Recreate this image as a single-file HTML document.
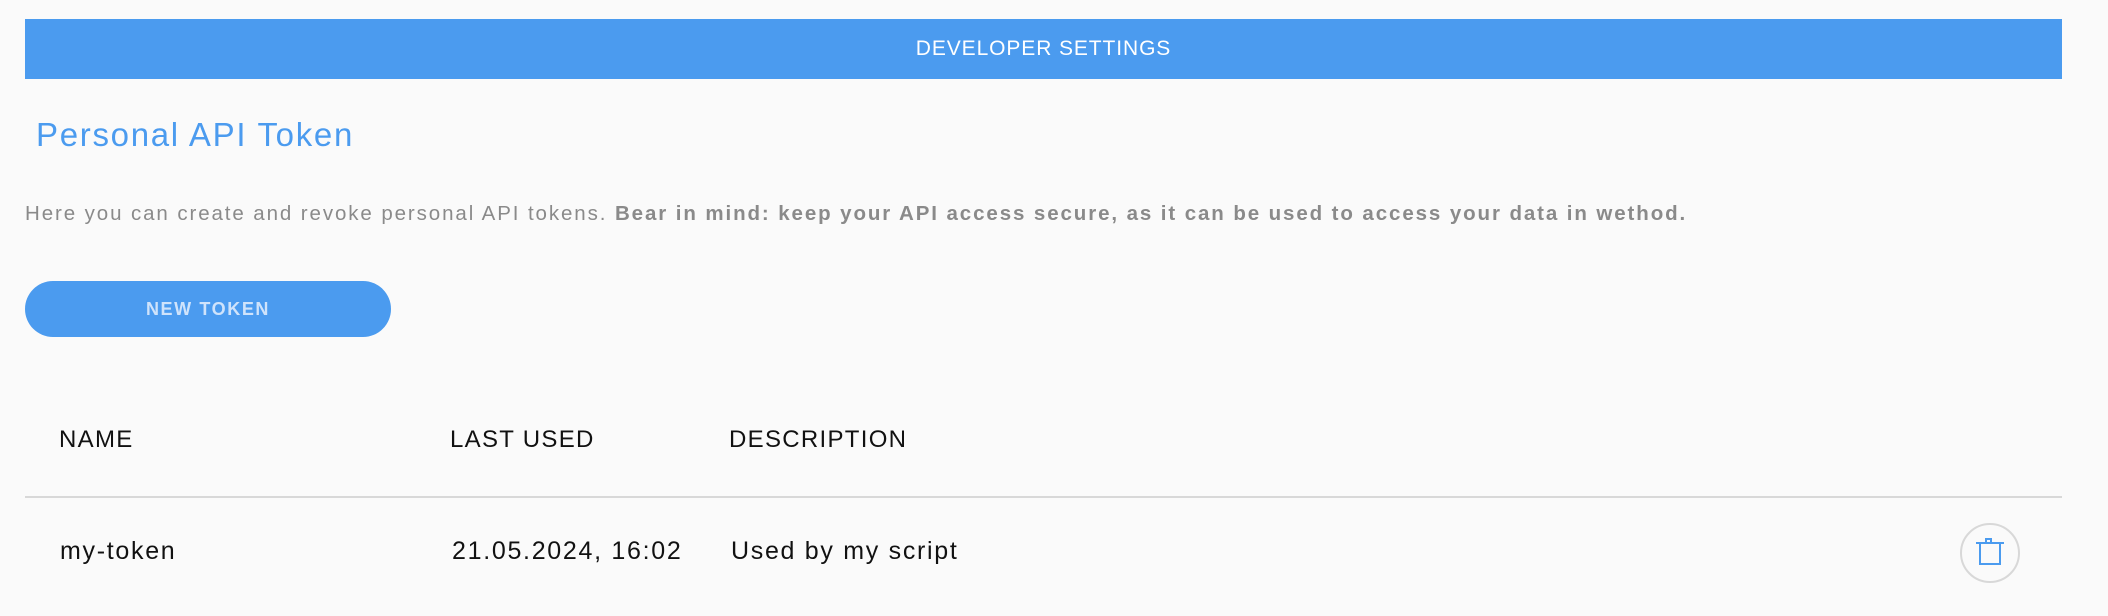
<!DOCTYPE html>
<html><head><style>
body{margin:0;width:2108px;height:616px;background:#fafafa;font-family:"Liberation Sans",sans-serif;position:relative;overflow:hidden}
.a{position:absolute;white-space:nowrap}
.h{font-size:24px;color:#111;letter-spacing:1.3px;top:426px}
.r{font-size:25px;color:#111;letter-spacing:1.7px;top:537px}
</style></head><body>
<div class="a" style="left:25px;top:19px;width:2037px;height:60px;background:#4b9bef;color:#fff;font-size:21px;line-height:60px;text-align:center;letter-spacing:0.9px">DEVELOPER SETTINGS</div>
<div class="a" style="left:36px;top:116px;font-size:33px;color:#4b9bef;letter-spacing:1.7px">Personal API Token</div>
<div class="a" style="left:25px;top:202px;font-size:20.5px;color:#8a8a8a;letter-spacing:1.9px">Here you can create and revoke personal API tokens. <b>Bear in mind: keep your API access secure, as it can be used to access your data in wethod.</b></div>
<div class="a" style="left:25px;top:281px;width:366px;height:56px;border-radius:28px;background:#4b9bef;color:#cfe3fb;font-weight:bold;font-size:18px;line-height:56px;text-align:center;letter-spacing:1.6px">NEW TOKEN</div>
<div class="a h" style="left:59px">NAME</div>
<div class="a h" style="left:450px">LAST USED</div>
<div class="a h" style="left:729px">DESCRIPTION</div>
<div class="a" style="left:25px;top:496px;width:2037px;height:2px;background:#d8d8d8"></div>
<div class="a r" style="left:60px">my-token</div>
<div class="a r" style="left:452px">21.05.2024, 16:02</div>
<div class="a r" style="left:731px">Used by my script</div>
<div class="a" style="left:1960px;top:523px;width:56px;height:56px;border:2px solid #d8d8d8;border-radius:50%"></div>
<svg class="a" style="left:1972px;top:535px" width="36" height="36" viewBox="0 0 36 36"><path d="M4 8H32M14 8V4H19V8M8 8V29H28V8" fill="none" stroke="#4b9bef" stroke-width="2"/></svg>
</body></html>
